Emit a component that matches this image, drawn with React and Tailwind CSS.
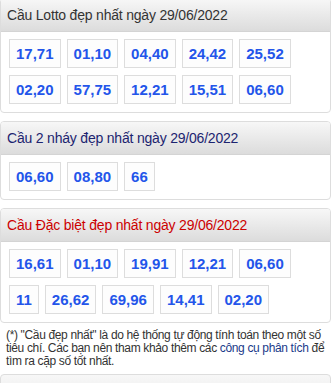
const sections = [
  {
    title: "Cầu Lotto đẹp nhất ngày 29/06/2022",
    color: "text-[#333333]",
    first: true,
    nums: ["17,71", "01,10", "04,40", "24,42", "25,52", "02,20", "57,75", "12,21", "15,51", "06,60"],
  },
  {
    title: "Cầu 2 nháy đẹp nhất ngày 29/06/2022",
    color: "text-[#1c2470]",
    nums: ["06,60", "08,80", "66"],
  },
  {
    title: "Cầu Đặc biệt đẹp nhất ngày 29/06/2022",
    color: "text-[#cc0000]",
    nums: ["16,61", "01,10", "19,91", "12,21", "06,60", "11", "26,62", "69,96", "14,41", "02,20"],
  },
];

// One box panel with a gradient header and a list of number pairs
const Panel = ({ title, color, nums, first }) => (
  <div
    className={`w-[331px] rounded-[4px] border border-[#dddddd] bg-white overflow-hidden ${
      first ? "-mt-[2px]" : "mt-[8px]"
    }`}
  >
    <div
      className={`h-[33px] flex items-center px-[6px] text-[14px] tracking-[-0.2px] bg-gradient-to-b from-[#f7f7f7] to-[#dcdcdc] border-b border-[#d4d4d4] ${color}`}
    >
      {title}
    </div>
    <div className="flex flex-wrap gap-x-[6px] gap-y-[7px] pl-[8px] pr-[6px] pt-[7px] pb-[8px]">
      {nums.map((n, i) => (
        <span
          key={i}
          className="border border-[#dddddd] bg-[#fdfdfd] px-[6px] py-[4px] text-[15px] leading-[19px] font-bold text-[#2355ea]"
        >
          {n}
        </span>
      ))}
    </div>
  </div>
);

export default function App() {
  return (
    <div className="w-[335px] h-[383px] overflow-hidden bg-white font-['Liberation_Sans',Arial,sans-serif]">
      {sections.map((s, i) => (
        <Panel key={i} {...s} />
      ))}
      <p className="pl-[6px] pr-[8px] pt-[6px] text-[12px] tracking-[-0.35px] leading-[13px] text-[#333333]">
        (*) "Cầu đẹp nhất" là do hệ thống tự động tính toán theo một số tiêu chí. Các bạn nên tham khảo thêm các{" "}
        <a className="text-[#1a3a8a]">công cụ phân tích</a> để tìm ra cặp số tốt nhất.
      </p>
      <div className="mt-[6px] w-[331px] h-[40px] rounded-[4px] border border-[#dddddd] bg-gradient-to-b from-[#f7f7f7] to-[#e8e8e8]" />
    </div>
  );
}
